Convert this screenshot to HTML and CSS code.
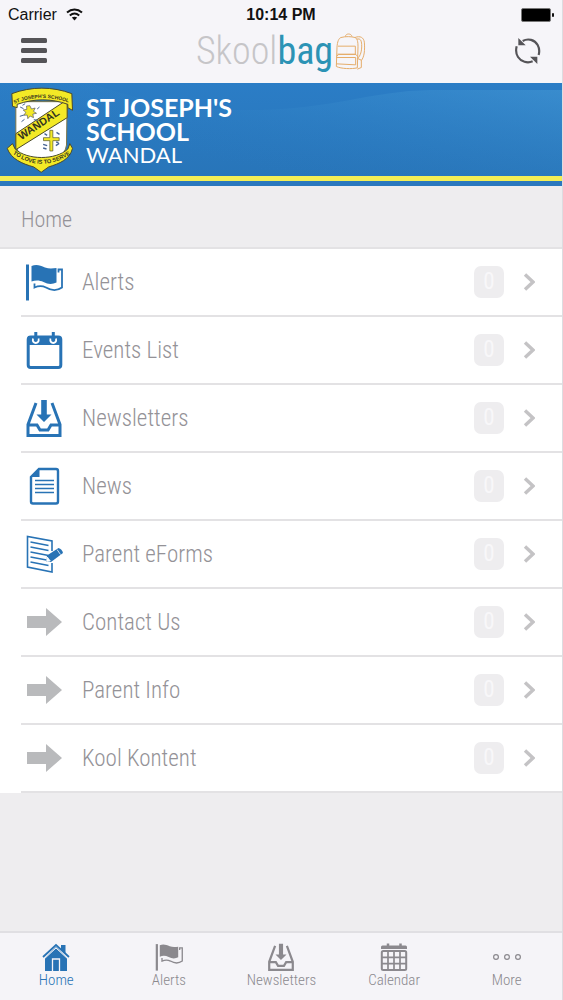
FILE: index.html
```
<!DOCTYPE html>
<html lang="en">
<head>
    <meta charset="UTF-8">
    <meta name="viewport" content="width=device-width, initial-scale=1.0">
    <title>Skoolbag - St Joseph's School Wandal</title>
    <link rel="stylesheet" href="styles.css">
</head>
<body>
    <!-- shared icons -->
    <svg class="sprite" aria-hidden="true">
        <symbol id="icon-flag" viewBox="0 0 38 38">
            <path d="M1 1.500h3v36H1z" fill="currentColor"/>
            <path d="M6.500 3C11 1 15 2 20 4.500c4 1.500 8 1 11.500.5V19.500c-4 2-8.500 2-13-.5-4-2-8-2-12-.5z" fill="currentColor"/>
            <path d="M33.500 9.500V6.500H37V24.500c-5 3.500-11 3-16 0-4-2-7-2-11.500 0v-4" fill="none" stroke="currentColor" stroke-width="1.800"/>
        </symbol>
        <symbol id="icon-tray" viewBox="0 0 38 38">
            <path d="M16.200 1h5.600v14.500h4.700L19 23l-7.500-7.500h4.700z" fill="currentColor"/>
            <path d="M11 4L3 25.500V36.500h32V25.500L27 4M3 26h9l3 5h8l3-5h9" fill="none" stroke="currentColor" stroke-width="3"/>
        </symbol>
        <symbol id="icon-arrow" viewBox="0 0 38 38">
            <path d="M2 13h19V5l16 14-16 14v-8H2z" fill="currentColor"/>
        </symbol>
        <symbol id="icon-chevron" viewBox="0 0 12 20">
            <path d="M2 2.500l8 7.500-8 7.500" fill="none" stroke="currentColor" stroke-width="3.400"/>
        </symbol>
    </svg>

    <header class="top">
        <div class="status-bar">
            <span class="carrier">
                Carrier
                <svg width="17" height="13" viewBox="0 0 17 13" fill="none" stroke="#111" stroke-width="2" aria-hidden="true">
                    <path d="M1 4.500c4.500-4 10.500-4 15 0M3.800 7.500c3-2.500 6.500-2.500 9.400 0"/>
                    <path d="M5.800 9.600c1.700-1.300 3.700-1.300 5.400 0L8.500 12.500z" fill="#111" stroke="none"/>
                </svg>
            </span>
            <span class="clock">10:14 PM</span>
            <span class="battery">
                <svg width="33" height="14" viewBox="0 0 33 14" aria-hidden="true">
                    <rect x="0.500" y="0.500" width="29" height="13" rx="1.500" fill="#000" stroke="#777"/>
                    <rect x="31" y="5" width="2" height="4" rx="1" fill="#111"/>
                </svg>
            </span>
        </div>

        <div class="nav-bar">
            <button type="button" class="nav-btn" aria-label="Menu">
                <svg width="28" height="28" viewBox="0 0 28 28" fill="#555458">
                    <rect x="1" y="1" width="26" height="5" rx="1.500"/>
                    <rect x="1" y="11" width="26" height="5" rx="1.500"/>
                    <rect x="1" y="21" width="26" height="5" rx="1.500"/>
                </svg>
            </button>
            <h1 class="logo">
                <span class="logo-text">Skool<b>bag</b></span>
                <svg width="32" height="39" viewBox="440 100 96 116" fill="none" stroke="#e5ad6b" stroke-width="3" stroke-linejoin="round" aria-hidden="true">
                    <path d="M447 203l2-58c1-16 5-27 12-29 14-4 31-3 42 0 7 3 9 12 9 28l-2 63c-17 4-48 3-63-4z"/>
                    <path d="M474 113c1-10 18-10 20 0M452 142h52v24h-54M448 172l6-5h52l5 6M447 176h58v22l-58-3"/>
                    <path d="M503 116c16-6 26 0 28 14 2 24 0 44-9 55M508 121c12-3 14 4 15 16 1 20-4 34-12 42M510 211l12-5v-22l-11-5"/>
                </svg>
            </h1>
            <button type="button" class="nav-btn" aria-label="Refresh">
                <svg width="28" height="28" viewBox="422 110 84 84" fill="none" stroke="#555458" stroke-width="6.500">
                    <path d="M448 122c16-9 36-4 45 12 5 9 6 19 3 30M478 183c-16 7-35 1-44-13-6-9-7-20-4-32"/>
                    <path d="M435 113v22h22zM492 191v-22h-22z" fill="#555458" stroke="none"/>
                </svg>
            </button>
        </div>
    </header>

    <!-- school banner -->
    <div class="banner">
        <svg class="banner-wave" viewBox="0 0 562 93" preserveAspectRatio="none" aria-hidden="true">
            <defs>
                <linearGradient id="wave" x1="1" y1="0" x2="0.200" y2="0.600">
                    <stop offset="0" stop-color="#4a9fd8" stop-opacity="0.500"/>
                    <stop offset="1" stop-color="#2a7cc2" stop-opacity="0"/>
                </linearGradient>
            </defs>
            <path d="M0 0H90C140 18 190 27 250 27 330 27 370 8 430 7H562V93H0z" fill="url(#wave)"/>
        </svg>
        <svg class="crest" width="69" height="86" viewBox="14 18 206 258" role="img" aria-label="School crest">
            <defs>
                <path id="crest-top" d="M41 68q82-33 168-2"/>
                <path id="crest-mid" d="M62 178L196 89"/>
                <path id="crest-bottom" d="M37 218q84 60 172 2"/>
            </defs>
            <path d="M46 62h154l-2 130c-4 34-40 54-76 68-40-14-72-36-76-70z" fill="#fff" stroke="#7b7446" stroke-width="3"/>
            <path d="M46 158L188 64h12v46L46 206z" fill="#f3e926" stroke="#4b4b2c" stroke-width="3"/>
            <path d="M36 76l-2-38c58-22 122-22 180 0l2 50-14-8v-10c-50-18-100-18-152 0v10z" fill="#f3e926" stroke="#4b4b2c" stroke-width="3"/>
            <path d="M36 188l8 16c36 34 122 34 158 0l6-16 8 14c-8 34-40 46-72 56l-22 16-22-16c-36-10-68-24-80-56z" fill="#f3e926" stroke="#4b4b2c" stroke-width="3"/>
            <path d="M88 74l5 10 11-3-5 10 9 6-11 2 2 11-10-5-7 8-2-11-10 1 6-9-8-7 11-2-1-10z" fill="#f3e926" stroke="#556" stroke-width="2"/>
            <path d="M59 78l10 5M58 106l12-4M100 116l14 2M110 84l7-6M72 115l-9 7M66 73l8-5" stroke="#456293" stroke-width="3"/>
            <path d="M148 148h9v22h19v9h-19v31h-9v-31h-19v-9h19z" fill="#f3e926" stroke="#4b4b2c" stroke-width="2"/>
            <path d="M132 158l8 5M168 154l9 6M128 190l12 4M166 194l10-7M138 204l-10-3M167 183l7 2" stroke="#456293" stroke-width="4"/>
            <g class="crest-text">
                <text font-size="15"><textPath href="#crest-top">ST JOSEPH'S SCHOOL</textPath></text>
                <text font-size="32"><textPath href="#crest-mid">WANDAL</textPath></text>
                <text font-size="17"><textPath href="#crest-bottom">TO LOVE IS TO SERVE</textPath></text>
            </g>
        </svg>
        <div class="school-name">
            <strong>ST JOSEPH'S</strong>
            <strong>SCHOOL</strong>
            <span>WANDAL</span>
        </div>
    </div>

    <main class="content">
        <h2 class="page-title">Home</h2>
        <ul class="menu">
            <li>
                <a href="#alerts">
                    <svg class="icon" aria-hidden="true"><use href="#icon-flag"/></svg>
                    <span class="label">Alerts</span>
                    <span class="badge">0</span>
                    <svg class="chevron" aria-hidden="true"><use href="#icon-chevron"/></svg>
                </a>
            </li>
            <li>
                <a href="#events">
                    <svg class="icon" viewBox="0 0 38 38" aria-hidden="true">
                        <rect x="3.200" y="6" width="32.600" height="30.500" rx="2.500" fill="none" stroke="currentColor" stroke-width="3"/>
                        <path d="M3 5h32v9H3z" fill="currentColor"/>
                        <path d="M8 7.500c-1.500 6 7 6 5.500 0M25.500 7.500c-1.500 6 7 6 5.500 0" fill="none" stroke="#fff" stroke-width="1.800"/>
                        <path d="M10.800 1v8M28.300 1v8" stroke="currentColor" stroke-width="3"/>
                    </svg>
                    <span class="label">Events List</span>
                    <span class="badge">0</span>
                    <svg class="chevron" aria-hidden="true"><use href="#icon-chevron"/></svg>
                </a>
            </li>
            <li>
                <a href="#newsletters">
                    <svg class="icon" aria-hidden="true"><use href="#icon-tray"/></svg>
                    <span class="label">Newsletters</span>
                    <span class="badge">0</span>
                    <svg class="chevron" aria-hidden="true"><use href="#icon-chevron"/></svg>
                </a>
            </li>
            <li>
                <a href="#news">
                    <svg class="icon" viewBox="0 0 38 38" fill="none" stroke="currentColor" aria-hidden="true">
                        <path d="M14 2h17q2 0 2 2v30.500q0 2-2 2H8q-2 0-2-2V10z" stroke-width="2.400"/>
                        <path d="M14.500 2v8H6z" fill="currentColor" stroke="none"/>
                        <path d="M10 13.500h19M10 17.500h19M10 21.500h19M10 25.500h19" stroke-width="1.300"/>
                    </svg>
                    <span class="label">News</span>
                    <span class="badge">0</span>
                    <svg class="chevron" aria-hidden="true"><use href="#icon-chevron"/></svg>
                </a>
            </li>
            <li>
                <a href="#eforms">
                    <svg class="icon" viewBox="0 0 38 38" fill="none" stroke="currentColor" aria-hidden="true">
                        <path d="M27 16V6L2.500 1.500v30.500L27 37v-9" stroke-width="1.600"/>
                        <path d="M5.500 7l18 3.500M5.500 12l18 3.500M5.500 17l18 3.500M5.500 22l16 3M5.500 27l18 3.500" stroke-width="1.400"/>
                        <path d="M22 20.500L33.500 13q3.500 1 4.500 5L26 27l-4.500 0z" fill="currentColor" stroke="none"/>
                        <path d="M22.300 22l-.5 4.500 3.500-.5zM32 14.500l3.500 5" fill="#fff" stroke="#fff" stroke-width="0.800"/>
                    </svg>
                    <span class="label">Parent eForms</span>
                    <span class="badge">0</span>
                    <svg class="chevron" aria-hidden="true"><use href="#icon-chevron"/></svg>
                </a>
            </li>
            <li>
                <a href="#contact">
                    <svg class="icon icon-grey" aria-hidden="true"><use href="#icon-arrow"/></svg>
                    <span class="label">Contact Us</span>
                    <span class="badge">0</span>
                    <svg class="chevron" aria-hidden="true"><use href="#icon-chevron"/></svg>
                </a>
            </li>
            <li>
                <a href="#info">
                    <svg class="icon icon-grey" aria-hidden="true"><use href="#icon-arrow"/></svg>
                    <span class="label">Parent Info</span>
                    <span class="badge">0</span>
                    <svg class="chevron" aria-hidden="true"><use href="#icon-chevron"/></svg>
                </a>
            </li>
            <li>
                <a href="#kontent">
                    <svg class="icon icon-grey" aria-hidden="true"><use href="#icon-arrow"/></svg>
                    <span class="label">Kool Kontent</span>
                    <span class="badge">0</span>
                    <svg class="chevron" aria-hidden="true"><use href="#icon-chevron"/></svg>
                </a>
            </li>
        </ul>
    </main>

    <nav class="tab-bar">
        <a href="#home" class="tab active">
            <svg viewBox="0 0 28 28" aria-hidden="true">
                <path d="M19 2h4.500v9L19 7z" fill="currentColor"/>
                <path d="M14 4l11 11v13H3V15z" fill="currentColor"/>
                <path d="M1 14L14 2l13 12" fill="none" stroke="currentColor" stroke-width="1.800"/>
                <path d="M3 15.200L14 5l11 10.200" fill="none" stroke="#f5f4f8" stroke-width="1"/>
                <path d="M10.500 28V16h7v12" fill="none" stroke="#f5f4f8" stroke-width="1.300"/>
            </svg>
            <span>Home</span>
        </a>
        <a href="#alerts" class="tab">
            <svg aria-hidden="true"><use href="#icon-flag"/></svg>
            <span>Alerts</span>
        </a>
        <a href="#newsletters" class="tab">
            <svg aria-hidden="true"><use href="#icon-tray"/></svg>
            <span>Newsletters</span>
        </a>
        <a href="#calendar" class="tab">
            <svg viewBox="0 0 28 28" fill="none" stroke="currentColor" aria-hidden="true">
                <path d="M1 6V4q0-1.500 1.500-1.500h23Q27 2.500 27 4v2z" fill="currentColor" stroke="none"/>
                <path d="M8 0.500v3M20.500 0.500v3" stroke-width="2.500"/>
                <rect x="1.800" y="8" width="24.400" height="19" rx="1.500" stroke-width="2"/>
                <path d="M2 14.300h24M2 20.600h24M8 8v19M14 8v19M20 8v19" stroke-width="1.700"/>
            </svg>
            <span>Calendar</span>
        </a>
        <a href="#more" class="tab">
            <svg viewBox="0 0 28 28" fill="none" stroke="currentColor" stroke-width="1.200" aria-hidden="true">
                <circle cx="3" cy="14" r="2.400"/>
                <circle cx="14" cy="14" r="2.400"/>
                <circle cx="25" cy="14" r="2.400"/>
            </svg>
            <span>More</span>
        </a>
    </nav>
</body>
</html>
```
FILE: styles.css
```
* {
    box-sizing: border-box;
}

body {
    margin: 0;
    min-height: 100vh;
    display: flex;
    flex-direction: column;
    font-family: "Roboto Condensed", "Liberation Sans Narrow", Roboto, sans-serif;
    font-weight: 300;
    color: #949297;
    background: #eeedef;
    border-right: 1px solid #dddce0;
}

a {
    color: inherit;
    text-decoration: none;
}

.sprite {
    display: none;
}

/* status bar + nav bar */
.top {
    background: #f6f5f9;
}

.status-bar {
    display: grid;
    grid-template-columns: 1fr auto 1fr;
    align-items: center;
    height: 29px;
    padding: 0 8px;
    font-family: "Liberation Sans", Arial, sans-serif;
    font-size: 16px;
    font-weight: 400;
    color: #111;
}

.carrier {
    display: flex;
    align-items: center;
    gap: 9px;
}

.clock {
    font-weight: 700;
}

.battery {
    display: flex;
    justify-content: flex-end;
}

.nav-bar {
    display: flex;
    align-items: center;
    justify-content: space-between;
    height: 54px;
    padding: 0 20px 10px;
}

.nav-btn {
    display: flex;
    padding: 0;
    border: none;
    background: none;
    cursor: pointer;
}

.logo {
    display: flex;
    align-items: center;
    gap: 1px;
    margin: 0;
    font-size: 38px;
    font-weight: 300;
    line-height: 44px;
    color: #c6c5c8;
}

.logo b {
    font-weight: 400;
    color: #2c93b5;
}

/* banner */
.banner {
    position: relative;
    display: flex;
    align-items: center;
    gap: 12px;
    height: 103px;
    padding: 0 5px 10px;
    color: #fff;
    background: linear-gradient(#2b7dc6, #2875b9 93px, #f4ee55 93px, #f4ee55 98px, #2b78be 98px);
}

.banner-wave {
    position: absolute;
    top: 0;
    left: 0;
    width: 100%;
    height: 93px;
}

.crest,
.school-name {
    position: relative;
}

.crest-text {
    font-family: "Liberation Sans", Arial, sans-serif;
    font-weight: 700;
    fill: #33331f;
}

.school-name {
    display: flex;
    flex-direction: column;
    padding-top: 2px;
    font-family: "Century Gothic", Lato, sans-serif;
    font-size: 25px;
    font-weight: 400;
    line-height: 24px;
}

.school-name span {
    font-size: 22px;
}

/* menu list */
.content {
    flex: 1;
}

.page-title {
    margin: 0;
    padding: 7px 21px 0;
    border-bottom: 2px solid #e3e2e4;
    font-size: 22px;
    font-weight: 300;
    line-height: 54px;
}

.menu {
    margin: 0;
    padding: 0 0 0 21px;
    list-style: none;
    background: #fff;
}

.menu a {
    display: flex;
    align-items: center;
    height: 68px;
    padding: 0 27px 0 4px;
    border-bottom: 2px solid #e3e2e4;
    font-size: 23px;
}

.icon {
    width: 38px;
    height: 38px;
    margin-right: 19px;
    color: #2873b5;
}

.icon-grey {
    color: #b9babc;
}

.label {
    flex: 1;
}

.badge {
    width: 30px;
    height: 32px;
    margin-right: 19px;
    border-radius: 7px;
    background: #eeedef;
    color: #f8f7f9;
    font-weight: 400;
    line-height: 32px;
    text-align: center;
}

.chevron {
    width: 12px;
    height: 20px;
    color: #c4c3c5;
}

/* bottom tabs */
.tab-bar {
    display: flex;
    height: 69px;
    margin-right: -1px;
    border-top: 2px solid #e0dfe3;
    background: #f5f4f8;
}

.tab {
    flex: 1 1 0;
    display: flex;
    flex-direction: column;
    align-items: center;
    padding-top: 10px;
    font-size: 15px;
    line-height: 18px;
    color: #8b898e;
}

.tab svg {
    width: 28px;
    height: 28px;
}

.tab.active {
    color: #2873b5;
}
```
